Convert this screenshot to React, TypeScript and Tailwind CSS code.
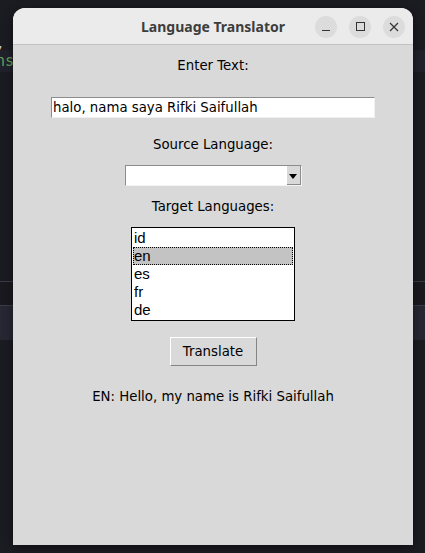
import React from 'react';

const langs = ['id', 'en', 'es', 'fr', 'de'];

const App: React.FC = () => {
  return (
    <div className="relative w-[425px] h-[553px] overflow-hidden bg-[#1b1b22] flex flex-col">
      {/* editor behind the window */}
      <div className="h-[38px]" />
      <div className="h-[12px] text-[#c8c8c8] font-['DejaVu_Sans_Mono',monospace] text-[14px] leading-[10px] -ml-[4px]">,</div>
      <div className="h-[22px] bg-[#20212a] text-[#5fa05a] font-['DejaVu_Sans_Mono',monospace] text-[15px] leading-[22px] -ml-[4px]">ns</div>
      <div className="h-[209px]" />
      <div className="h-px bg-[#3b3b47]" />
      <div className="h-[23px] bg-[#19191f]" />
      <div className="h-px bg-[#3b3b47]" />
      <div className="h-[34px] bg-[#272733]" />
      <div className="flex-1" />

      {/* Tk window */}
      <div className="absolute left-[13px] top-[8px] w-[400px] h-[537px] flex flex-col rounded-t-[12px] overflow-hidden bg-[#d9d9d9] shadow-[0_2px_10px_rgba(0,0,0,0.5)]">
        <div className="h-[37px] shrink-0 grid grid-cols-[1fr_auto_1fr] items-center bg-[#ebebeb] border-b border-[#c2c2c2]">
          <div />
          <div className="font-['Noto_Sans',sans-serif] font-bold text-[14px] text-[#3d3d3d] pt-[1px]">
            Language Translator
          </div>
          <div className="flex justify-end items-center gap-[12px] pr-[8px] pt-[1px]">
            <div className="w-[22px] h-[22px] rounded-full bg-[#dcdcdc] flex items-center justify-center">
              <div className="w-[8px] h-px bg-[#333] mt-[7px]" />
            </div>
            <div className="w-[22px] h-[22px] rounded-full bg-[#dcdcdc] flex items-center justify-center">
              <div className="w-[9px] h-[9px] border border-[#333]" />
            </div>
            <div className="w-[22px] h-[22px] rounded-full bg-[#dcdcdc] flex items-center justify-center">
              <svg width="10" height="10" viewBox="0 0 10 10">
                <path d="M1 1L9 9M9 1L1 9" stroke="#333" strokeWidth="1.2" />
              </svg>
            </div>
          </div>
        </div>

        <div className="flex flex-col items-center font-['DejaVu_Sans',sans-serif] text-[13.3px] text-black leading-[17px]">
          <div className="mt-[12px]">Enter Text:</div>

          <div className="mt-[23px] w-[324px] h-[21px] bg-white border-t border-l border-[#8c8c8c] border-r-[#f0f0f0] border-b-[#f0f0f0] border-r border-b px-[1px] leading-[19px] whitespace-nowrap">
            halo, nama saya Rifki Saifullah
          </div>

          <div className="mt-[18px]">Source Language:</div>

          <div className="mt-[12px] w-[177px] h-[21px] flex bg-white border-t border-l border-[#8c8c8c] border-r border-b border-r-[#f4f4f4] border-b-[#f4f4f4]">
            <div className="flex-1" />
            <div className="w-[14px] h-full bg-[#d9d9d9] border-r border-b border-[#8c8c8c] flex items-end justify-center pb-[4px]">
              <svg width="8" height="6" viewBox="0 0 8 6">
                <path d="M0 0H8L4 5Z" fill="#000" />
              </svg>
            </div>
          </div>

          <div className="mt-[12px]">Target Languages:</div>

          <div className="mt-[12px] w-[164px] h-[94px] bg-white border border-black px-px pt-px font-['Liberation_Sans',sans-serif] text-[15px] leading-[16px]">
            {langs.map((l) => (
              <div
                key={l}
                className={
                  l === 'en'
                    ? 'h-[18px] bg-[#c3c3c3] border border-dotted border-black'
                    : 'h-[18px] border border-transparent'
                }
              >
                {l}
              </div>
            ))}
          </div>

          <div className="mt-[16px] w-[87px] h-[29px] bg-[#d9d9d9] border border-t-white border-l-white border-r-[#858585] border-b-[#858585] flex items-center justify-center">
            Translate
          </div>

          <div className="mt-[22px]">EN: Hello, my name is Rifki Saifullah</div>
        </div>
      </div>
    </div>
  );
};

export default App;
